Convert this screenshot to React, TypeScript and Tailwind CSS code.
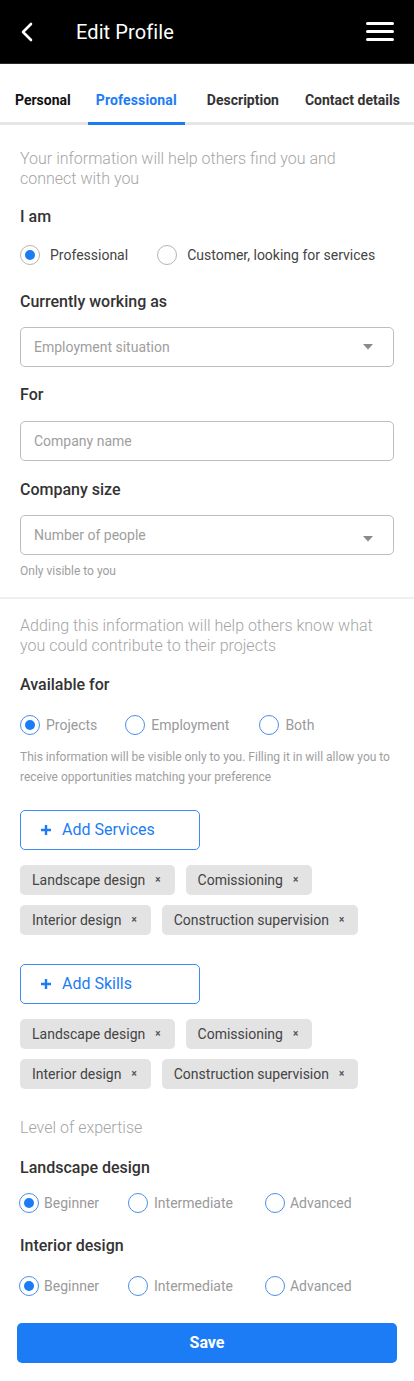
import React from 'react';

const BLUE = 'text-[#1b7cf6]';

const Radio = ({ checked, blueRing }: { checked?: boolean; blueRing?: boolean }) => (
  <span
    className={`flex h-[20px] w-[20px] shrink-0 items-center justify-center rounded-full border-[1.5px] ${
      blueRing ? 'border-[#4a8fe8]' : 'border-[#b5b5b5]'
    } bg-white`}
  >
    {checked && <span className="h-[10px] w-[10px] rounded-full bg-[#1b7cf6]" />}
  </span>
);

const Chip = ({ label }: { label: string }) => (
  <span className="flex h-[30px] items-center gap-[10px] rounded-[5px] bg-[#e3e3e3] pl-3 pr-[14px] text-[14px] text-[#444]">
    {label}
    <span className="text-[10px] font-bold leading-none text-[#555]">×</span>
  </span>
);

const Caret = () => (
  <svg width="10" height="6" viewBox="0 0 10 6" className="shrink-0">
    <path d="M0 0 H10 L5 5.5 Z" fill="#8a8a8a" />
  </svg>
);

const AddButton = ({ label }: { label: string }) => (
  <button className={`flex h-10 w-[180px] items-center gap-[10px] rounded-[5px] border border-[#3d8af0] bg-white pl-[19px] text-[16px] ${BLUE}`}>
    <svg width="12" height="12" viewBox="0 0 12 12">
      <path d="M6 1 V11 M1 6 H11" stroke="#1b7cf6" strokeWidth="2.4" />
    </svg>
    {label}
  </button>
);

const LevelRow = () => (
  <div className="flex h-5 items-center text-[14px] text-[#9a9a9a]">
    <span className="ml-[-1px] flex items-center gap-[5px]">
      <Radio checked blueRing />
      Beginner
    </span>
    <span className="ml-[29px] flex items-center gap-[6px]">
      <Radio blueRing />
      Intermediate
    </span>
    <span className="ml-[32px] flex items-center gap-[5px]">
      <Radio blueRing />
      Advanced
    </span>
  </div>
);

export default function App() {
  const chips = ['Landscape design', 'Comissioning', 'Interior design', 'Construction supervision'];

  return (
    <div className="min-h-[1381px] w-[414px] bg-white font-['Roboto',sans-serif]">
      {/* Top bar */}
      <header className="flex h-16 items-center border-b border-[#2a2a2a] bg-black text-white">
        <svg width="14" height="20" viewBox="0 0 14 20" className="ml-[20px]">
          <path d="M11 2 L3 10 L11 18" fill="none" stroke="white" strokeWidth="2.6" strokeLinecap="round" strokeLinejoin="round" />
        </svg>
        <h1 className="ml-[42px] text-[20px] font-normal tracking-[0.1px]">Edit Profile</h1>
        <div className="ml-auto mr-[20px] flex w-[28px] flex-col gap-[4.5px]">
          <span className="h-[3.5px] rounded-full bg-white" />
          <span className="h-[3.5px] rounded-full bg-white" />
          <span className="h-[3.5px] rounded-full bg-white" />
        </div>
      </header>

      {/* Tabs */}
      <nav className="flex h-[61px] items-stretch border-b-[3px] border-[#e6e6e6] text-[14px] font-bold">
        <span className="ml-[7px] flex items-center px-2 pt-[14px] text-[#111]">Personal</span>
        <span className={`relative ml-[9px] flex items-center px-2 pt-[14px] tracking-[0.15px] ${BLUE}`}>
          Professional
          <span className="absolute -bottom-[3px] left-0 right-0 h-[3px] bg-[#1b7cf6]" />
        </span>
        <span className="ml-[14px] flex items-center px-2 pt-[14px] text-[#333]">Description</span>
        <span className="ml-[10px] flex items-center px-2 pt-[14px] text-[#333]">Contact details</span>
      </nav>

      {/* Section 1 */}
      <section className="px-5 pt-6 pb-[18px]">
        <p className="text-[16px] font-light leading-5 text-[#a5a5a5]">
          Your information will help others find you and connect with you
        </p>
        <h2 className="mt-[18px] text-[16px] font-medium leading-5 text-[#333]">I am</h2>
        <div className="mt-[18px] flex h-5 items-center text-[14px] text-[#444]">
          <span className="flex items-center gap-[10px]">
            <Radio checked />
            Professional
          </span>
          <span className="ml-[29px] flex items-center gap-[10px]">
            <Radio />
            Customer, looking for services
          </span>
        </div>

        <h2 className="mt-[27px] text-[16px] font-medium leading-5 text-[#333]">Currently working as</h2>
        <div className="mt-[15px] flex h-10 items-center justify-between rounded-[5px] border border-[#bdbdbd] pl-[13px] pr-[20px] text-[14px] text-[#9e9e9e]">
          Employment situation
          <Caret />
        </div>

        <h2 className="mt-[18px] text-[16px] font-medium leading-5 text-[#333]">For</h2>
        <div className="mt-[16px] flex h-10 items-center rounded-[5px] border border-[#bdbdbd] pl-[13px] text-[14px] text-[#9e9e9e]">
          Company name
        </div>

        <h2 className="mt-[19px] text-[16px] font-medium leading-5 text-[#333]">Company size</h2>
        <div className="mt-[15px] flex h-10 items-center justify-between rounded-[5px] border border-[#bdbdbd] pl-[13px] pr-[20px] text-[14px] text-[#9e9e9e]">
          Number of people
          <span className="mt-[8px]">
            <Caret />
          </span>
        </div>
        <p className="mt-[8px] text-[12px] leading-4 text-[#9e9e9e]">Only visible to you</p>
      </section>

      <div className="h-[2px] bg-[#efefef]" />

      {/* Section 2 */}
      <section className="px-5 pt-[17px]">
        <p className="text-[16px] font-light leading-5 text-[#a5a5a5]">
          Adding this information will help others know what you could contribute to their projects
        </p>
        <h2 className="mt-[19px] text-[16px] font-medium leading-5 text-[#333]">Available for</h2>
        <div className="mt-[20px] flex h-5 items-center text-[14px] text-[#9a9a9a]">
          <span className="flex items-center gap-[6px]">
            <Radio checked blueRing />
            Projects
          </span>
          <span className="ml-[28px] flex items-center gap-[6px]">
            <Radio blueRing />
            Employment
          </span>
          <span className="ml-[30px] flex items-center gap-[6px]">
            <Radio blueRing />
            Both
          </span>
        </div>
        <p className="mt-[12px] text-[12px] leading-5 text-[#9e9e9e]">
          This information will be visible only to you. Filling it in will allow you to receive opportunities matching your preference
        </p>

        <div className="mt-[23px]">
          <AddButton label="Add Services" />
        </div>
        <div className="mt-[15px] flex w-[360px] flex-wrap gap-x-[11px] gap-y-[10px]">
          {chips.map((c) => (
            <Chip key={c} label={c} />
          ))}
        </div>

        <div className="mt-[29px]">
          <AddButton label="Add Skills" />
        </div>
        <div className="mt-[15px] flex w-[360px] flex-wrap gap-x-[11px] gap-y-[10px]">
          {chips.map((c) => (
            <Chip key={c} label={c} />
          ))}
        </div>

        <p className="mt-[29px] text-[16px] font-light leading-5 text-[#a5a5a5]">Level of expertise</p>
        <h2 className="mt-[20px] text-[16px] font-medium leading-5 text-[#333]">Landscape design</h2>
        <div className="mt-[15px]">
          <LevelRow />
        </div>
        <h2 className="mt-[23px] text-[16px] font-medium leading-5 text-[#333]">Interior design</h2>
        <div className="mt-[20px]">
          <LevelRow />
        </div>
      </section>

      <div className="px-[17px] pt-[27px] pb-[18px]">
        <button className="flex h-10 w-full items-center justify-center rounded-[5px] bg-[#1b7cf6] text-[16px] font-bold text-white">
          Save
        </button>
      </div>
    </div>
  );
}
